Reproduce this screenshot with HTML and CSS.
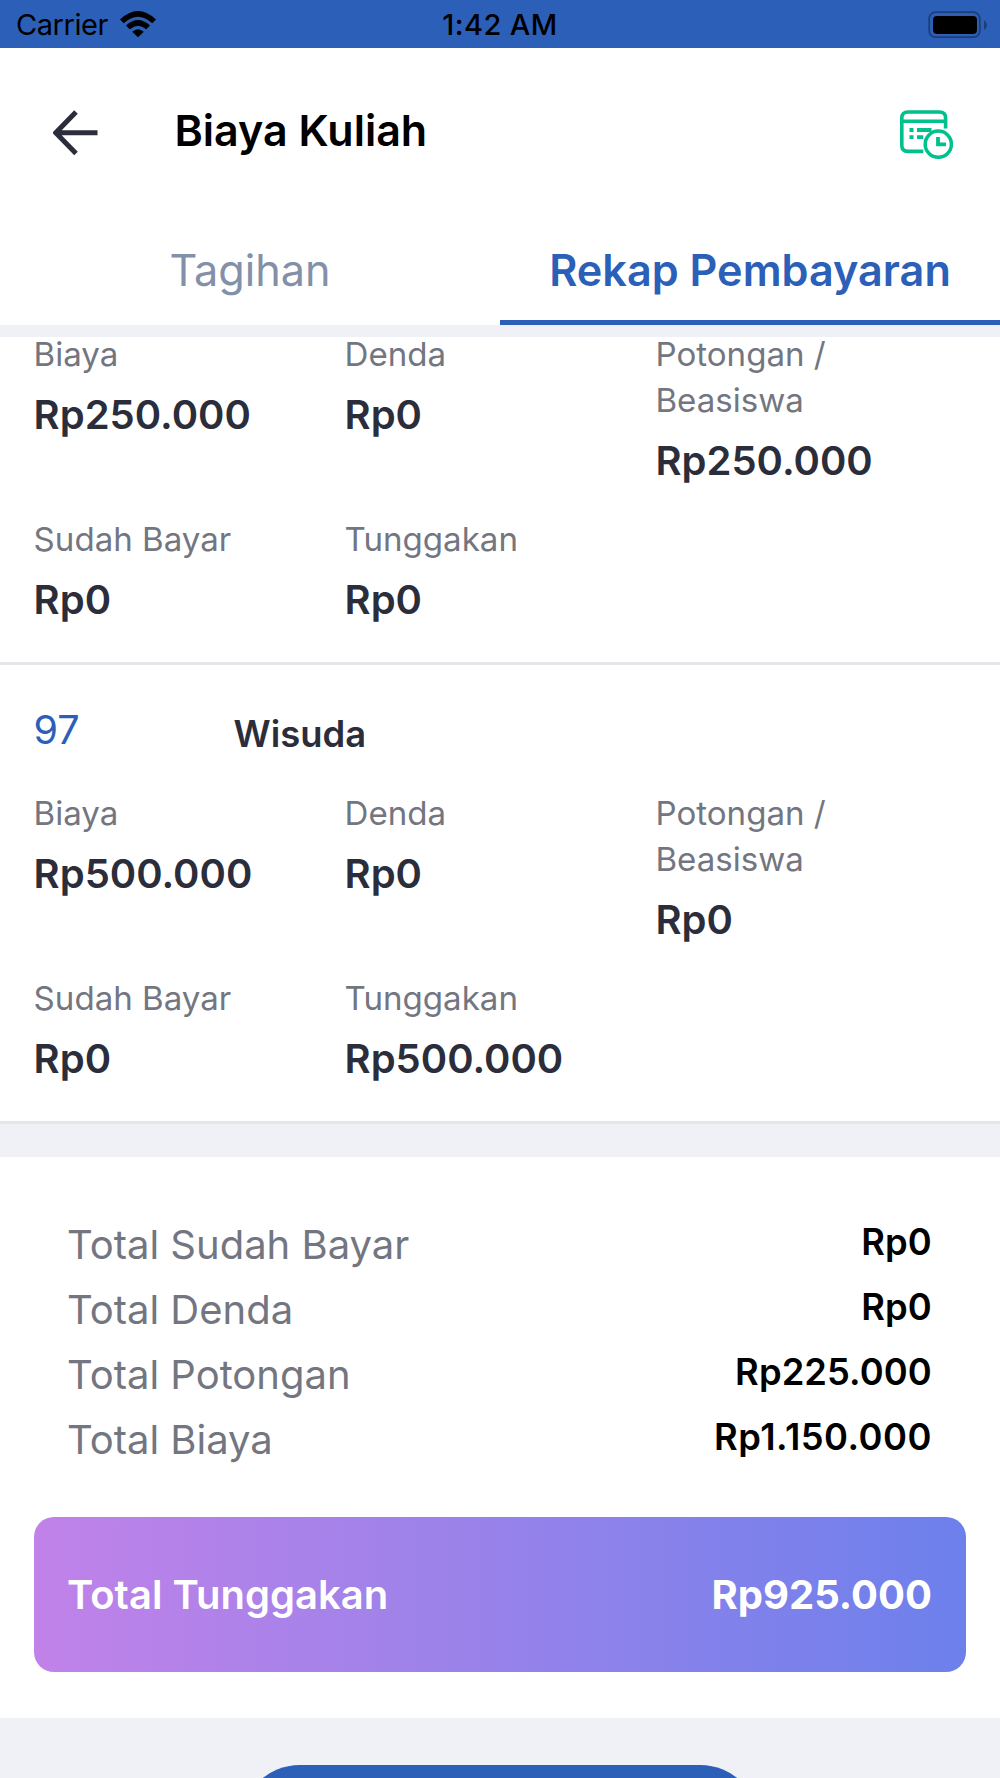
FILE: index.html
```html
<!DOCTYPE html>
<html lang="id">
<head>
<meta charset="UTF-8">
<meta name="viewport" content="width=device-width, initial-scale=1.0">
<title>Biaya Kuliah</title>
<link rel="stylesheet" href="styles.css">
</head>
<body>
<div class="screen">
    <!-- Status bar -->
    <div class="status-bar">
        <div class="carrier">
            <span>Carrier</span>
            <svg class="wifi" width="38" height="28" viewBox="0 0 38 28">
                <path d="M1 9.5 Q19 -7.5 37 9.5 L33.3 13.3 Q19 .3 4.7 13.3 Z"/>
                <path d="M7 15.5 Q19 4.5 31 15.5 L27.2 19.3 Q19 12.2 10.8 19.3 Z"/>
                <path d="M13.2 21.8 Q19 16.6 24.8 21.8 L19 27.3 Z"/>
            </svg>
        </div>
        <span class="time">1:42 AM</span>
        <svg class="battery" width="60" height="28" viewBox="0 0 60 28">
            <rect x="1.2" y="1.2" width="50.6" height="25" rx="6.5" fill="none" stroke="#1d3f79" stroke-width="1.8"/>
            <rect x="5" y="5" width="44" height="18" rx="4"/>
            <path d="M56 9 Q59 11 59 14 Q59 17 56 19 Z" fill="#1d3f79"/>
        </svg>
    </div>

    <!-- Header -->
    <header class="header">
        <svg class="back" width="46" height="46" viewBox="0 0 46 46">
            <path d="M44.5 22.7 H3 M23 2 L2.8 22.7 L23 43.4" fill="none" stroke="#2b2d3b" stroke-width="5"/>
        </svg>
        <h1>Biaya Kuliah</h1>
        <svg class="history" width="54" height="50" viewBox="0 0 54 50" fill="none" stroke="#00c08b">
            <path d="M45.6 18.5 V8 Q45.6 2 39.5 2 H8 Q1.8 2 1.8 8 V35.5 Q1.8 41.4 8 41.4 H23.3 M2 11.3 H45.5" stroke-width="3.6"/>
            <path d="M9.5 20 H13.5 M17 20 H31.5 M9.5 27.2 H13.5 M17 27.2 H23.2" stroke-width="3.8"/>
            <circle cx="38.3" cy="34.2" r="13.1" stroke-width="3.5"/>
            <path d="M38 27 V34.3 H46" stroke-width="3.8"/>
        </svg>
    </header>

    <nav class="tabs">
        <div class="tab">Tagihan</div>
        <div class="tab active">Rekap Pembayaran</div>
    </nav>

    <!-- Payment list -->
    <main class="list">
        <section class="item scrolled">
            <div class="details">
                <div class="cell"><p class="label">Biaya</p><p class="value">Rp250.000</p></div>
                <div class="cell"><p class="label">Denda</p><p class="value">Rp0</p></div>
                <div class="cell"><p class="label">Potongan / Beasiswa</p><p class="value">Rp250.000</p></div>
                <div class="cell"><p class="label">Sudah Bayar</p><p class="value">Rp0</p></div>
                <div class="cell"><p class="label">Tunggakan</p><p class="value">Rp0</p></div>
            </div>
        </section>
        <section class="item">
            <div class="item-head">
                <span class="number">97</span>
                <span class="name">Wisuda</span>
            </div>
            <div class="details">
                <div class="cell"><p class="label">Biaya</p><p class="value">Rp500.000</p></div>
                <div class="cell"><p class="label">Denda</p><p class="value">Rp0</p></div>
                <div class="cell"><p class="label">Potongan / Beasiswa</p><p class="value">Rp0</p></div>
                <div class="cell"><p class="label">Sudah Bayar</p><p class="value">Rp0</p></div>
                <div class="cell"><p class="label">Tunggakan</p><p class="value">Rp500.000</p></div>
            </div>
        </section>
    </main>

    <!-- Totals -->
    <section class="summary">
        <div class="row"><span>Total Sudah Bayar</span><b>Rp0</b></div>
        <div class="row"><span>Total Denda</span><b>Rp0</b></div>
        <div class="row"><span>Total Potongan</span><b>Rp225.000</b></div>
        <div class="row total"><span>Total Biaya</span><b>Rp1.150.000</b></div>
        <div class="arrears">
            <span>Total Tunggakan</span>
            <strong>Rp925.000</strong>
        </div>
    </section>

    <button class="pay" type="button"></button>
</div>
</body>
</html>
```
FILE: styles.css
```css
* {
    box-sizing: border-box;
}

body {
    margin: 0;
    font-family: Inter, sans-serif;
    color: #2b2d3b;
    background-color: #f0f1f6;
}

h1, p {
    margin: 0;
}

.screen {
    width: 1000px;
    height: 1778px;
    overflow: hidden;
}

/* Status bar */
.status-bar {
    display: grid;
    grid-template-columns: 1fr auto 1fr;
    align-items: center;
    height: 48.3px;
    padding: 0 12px;
    background-color: #2b5fb8;
    color: #000;
    font-size: 29px;
    line-height: 50px;
}

.carrier {
    display: flex;
    align-items: center;
    gap: 11px;
    padding-left: 4px;
    letter-spacing: -0.45px;
}

.wifi {
    margin-bottom: 3px;
}

.time {
    font-weight: 500;
    letter-spacing: 0.4px;
}

.battery {
    justify-self: end;
}

/* Header */
.header {
    display: flex;
    align-items: center;
    height: 168.7px;
    padding: 0 46px 0 53px;
    background-color: #fff;
}

.header h1 {
    flex: 1;
    margin: 0 0 5px 75.5px;
    font-size: 43px;
    font-weight: 600;
    line-height: 60px;
    color: #000;
}

.history {
    margin-top: 4px;
}

.tabs {
    display: flex;
    height: 108px;
    background-color: #fff;
}

.tab {
    flex: 1;
    padding-top: 22px;
    border-bottom: 5.5px solid transparent;
    text-align: center;
    font-size: 43.2px;
    line-height: 62px;
    color: #8290a8;
}

.tab.active {
    font-weight: 600;
    color: #2b5fb8;
    border-color: #2b5fb8;
}

/* Payment list */
.list {
    margin-top: 12px;
}

.item {
    display: flow-root;
    padding: 40px 33.6px 35px;
    border-bottom: 3.5px solid #e4e6e9;
    background-color: #fff;
}

/* top of this item is already scrolled under the tabs */
.item.scrolled {
    padding-top: 0;
}

.item.scrolled .details {
    margin-top: -6px;
}

.item-head {
    display: flex;
    margin-bottom: 35px;
    line-height: 50px;
}

.number {
    width: 200px;
    font-size: 39.5px;
    color: #2b5fb8;
}

.name {
    padding-top: 4px;
    margin-bottom: -4px;
    font-size: 36.4px;
    font-weight: 600;
}

.details {
    display: grid;
    grid-template-columns: repeat(3, 1fr);
    row-gap: 28px;
}

.label {
    margin-bottom: 10px;
    padding-right: 60px;
    font-size: 33.1px;
    line-height: 46px;
    color: #737680;
}

.value {
    font-size: 40px;
    font-weight: 600;
    line-height: 55px;
}

/* Totals */
.summary {
    margin-top: 33px;
    padding: 55px 33.6px 46px;
    background-color: #fff;
}

.row {
    display: flex;
    justify-content: space-between;
    height: 65px;
    padding: 0 34.5px 0 33.4px;
    font-size: 40px;
    line-height: 65px;
    color: #737680;
}

.row b {
    font-size: 36.3px;
    font-weight: 600;
    line-height: 61px;
    letter-spacing: 0.1px;
    color: #000;
}

.row.total b {
    letter-spacing: 0.5px;
}

.arrears {
    display: flex;
    align-items: center;
    justify-content: space-between;
    height: 155px;
    margin-top: 45.5px;
    padding: 0 34.5px 0 33.4px;
    border-radius: 20px;
    background: linear-gradient(to right, #c182e9, #9782ea 50%, #6c80ec);
    color: #fff;
    font-size: 40px;
    font-weight: 600;
}

.arrears strong {
    font-weight: 700;
}

.pay {
    display: block;
    width: 520px;
    height: 120px;
    margin: 46.5px auto 0;
    border: none;
    border-radius: 60px;
    background-color: #2b5fb8;
}
```
